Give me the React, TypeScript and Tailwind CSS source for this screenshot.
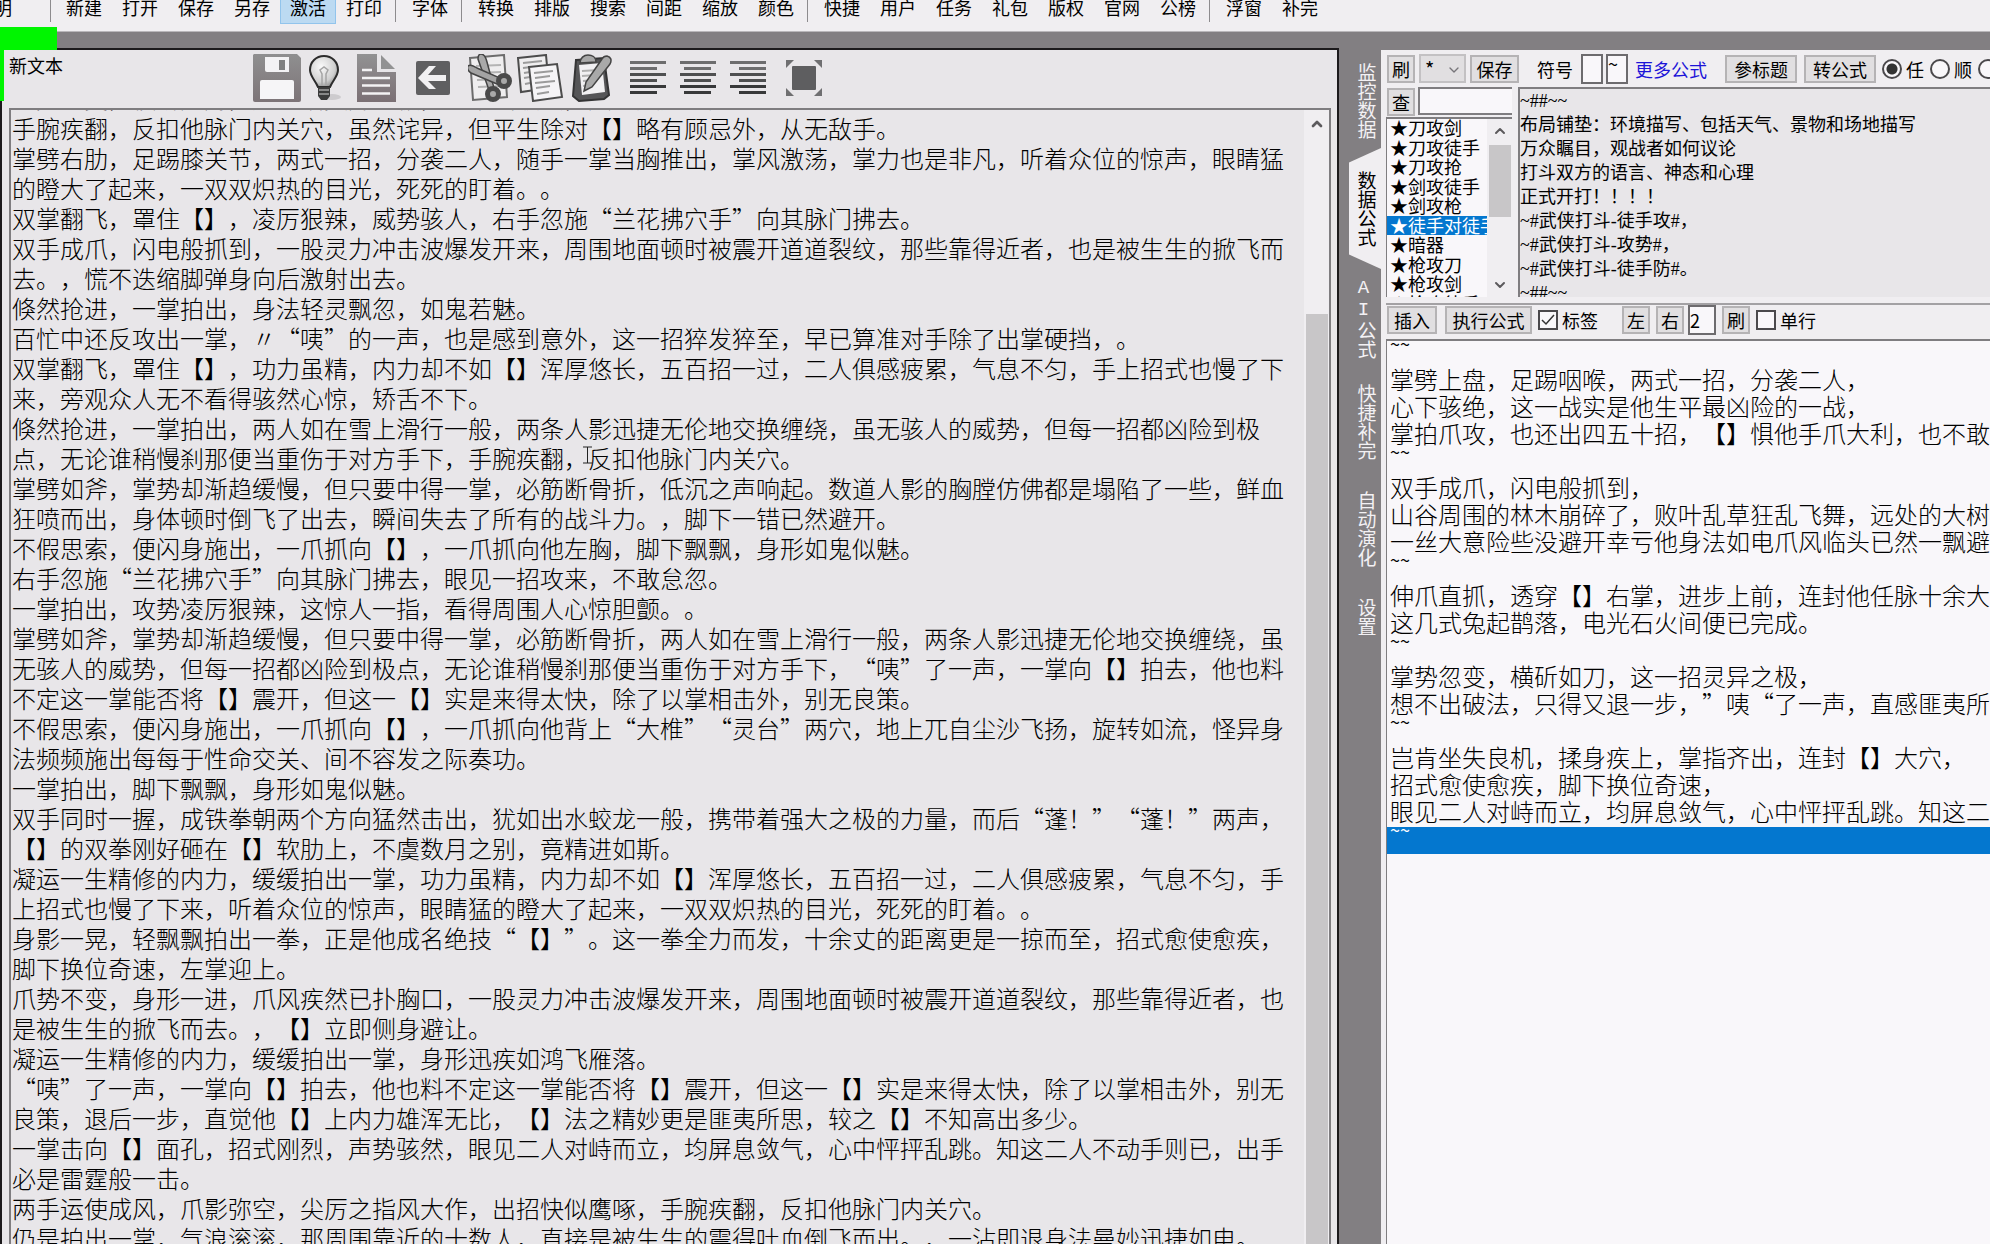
import { useEffect, useRef } from 'react';
import { ChevronDown, ChevronUp } from 'lucide-react';
import clsx from 'clsx';

const MENU_GROUPS = [
  ['新建', '打开', '保存', '另存', '激活', '打印'],
  ['字体'],
  ['转换', '排版', '搜索', '间距', '缩放', '颜色'],
  ['快捷', '用户', '任务', '礼包', '版权', '官网', '公榜'],
  ['浮窗', '补完'],
];

const SIDE_TABS = ['监控数据', '数据公式', 'AI公式', '快捷补完', '自动演化', '设置'];

const FORMULAS = [
  '★刀攻剑',
  '★刀攻徒手',
  '★刀攻抢',
  '★剑攻徒手',
  '★剑攻枪',
  '★徒手对徒手',
  '★暗器',
  '★枪攻刀',
  '★枪攻剑',
  '★枪攻徒手',
];

const FORMULA_TEXT = `~##~~
布局铺垫：环境描写、包括天气、景物和场地描写
万众瞩目，观战者如何议论
打斗双方的语言、神态和心理
正式开打！！！！
~#武侠打斗-徒手攻#，
~#武侠打斗-攻势#，
~#武侠打斗-徒手防#。
~##~~`;

const RESULTS = [
  '~~',
  '掌劈上盘，足踢咽喉，两式一招，分袭二人，',
  '心下骇绝，这一战实是他生平最凶险的一战，',
  '掌拍爪攻，也还出四五十招，【】惧他手爪大利，也不敢',
  '~~',
  '双手成爪，闪电般抓到，',
  '山谷周围的林木崩碎了，败叶乱草狂乱飞舞，远处的大树',
  '一丝大意险些没避开幸亏他身法如电爪风临头已然一飘避',
  '~~',
  '伸爪直抓，透穿【】右掌，进步上前，连封他任脉十余大',
  '这几式兔起鹊落，电光石火间便已完成。',
  '~~',
  '掌势忽变，横斫如刀，这一招灵异之极，',
  '想不出破法，只得又退一步，”咦“了一声，直感匪夷所',
  '~~',
  '岂肯坐失良机，揉身疾上，掌指齐出，连封【】大穴，',
  '招式愈使愈疾，脚下换位奇速，',
  '眼见二人对峙而立，均屏息敛气，心中怦抨乱跳。知这二',
];

const ARTICLE = `掌势忽变，横斫如刀，这一招灵异之极，想不出破法，只得又退一步。
手腕疾翻，反扣他脉门内关穴，虽然诧异，但平生除对【】略有顾忌外，从无敌手。
掌劈右肋，足踢膝关节，两式一招，分袭二人，随手一掌当胸推出，掌风激荡，掌力也是非凡，听着众位的惊声，眼睛猛
的瞪大了起来，一双双炽热的目光，死死的盯着。。
双掌翻飞，罩住【】，凌厉狠辣，威势骇人，右手忽施“兰花拂穴手”向其脉门拂去。
双手成爪，闪电般抓到，一股灵力冲击波爆发开来，周围地面顿时被震开道道裂纹，那些靠得近者，也是被生生的掀飞而
去。，慌不迭缩脚弹身向后激射出去。
倏然抢进，一掌拍出，身法轻灵飘忽，如鬼若魅。
百忙中还反攻出一掌，〃“咦”的一声，也是感到意外，这一招猝发猝至，早已算准对手除了出掌硬挡，。
双掌翻飞，罩住【】，功力虽精，内力却不如【】浑厚悠长，五百招一过，二人俱感疲累，气息不匀，手上招式也慢了下
来，旁观众人无不看得骇然心惊，矫舌不下。
倏然抢进，一掌拍出，两人如在雪上滑行一般，两条人影迅捷无伦地交换缠绕，虽无骇人的威势，但每一招都凶险到极
点，无论谁稍慢刹那便当重伤于对方手下，手腕疾翻，反扣他脉门内关穴。
掌劈如斧，掌势却渐趋缓慢，但只要中得一掌，必筋断骨折，低沉之声响起。数道人影的胸膛仿佛都是塌陷了一些，鲜血
狂喷而出，身体顿时倒飞了出去，瞬间失去了所有的战斗力。，脚下一错已然避开。
不假思索，便闪身施出，一爪抓向【】，一爪抓向他左胸，脚下飘飘，身形如鬼似魅。
右手忽施“兰花拂穴手”向其脉门拂去，眼见一招攻来，不敢怠忽。
一掌拍出，攻势凌厉狠辣，这惊人一指，看得周围人心惊胆颤。。
掌劈如斧，掌势却渐趋缓慢，但只要中得一掌，必筋断骨折，两人如在雪上滑行一般，两条人影迅捷无伦地交换缠绕，虽
无骇人的威势，但每一招都凶险到极点，无论谁稍慢刹那便当重伤于对方手下，“咦”了一声，一掌向【】拍去，他也料
不定这一掌能否将【】震开，但这一【】实是来得太快，除了以掌相击外，别无良策。
不假思索，便闪身施出，一爪抓向【】，一爪抓向他背上“大椎”“灵台”两穴，地上兀自尘沙飞扬，旋转如流，怪异身
法频频施出每每于性命交关、间不容发之际奏功。
一掌拍出，脚下飘飘，身形如鬼似魅。
双手同时一握，成铁拳朝两个方向猛然击出，犹如出水蛟龙一般，携带着强大之极的力量，而后“蓬！”“蓬！”两声，
【】的双拳刚好砸在【】软肋上，不虞数月之别，竟精进如斯。
凝运一生精修的内力，缓缓拍出一掌，功力虽精，内力却不如【】浑厚悠长，五百招一过，二人俱感疲累，气息不匀，手
上招式也慢了下来，听着众位的惊声，眼睛猛的瞪大了起来，一双双炽热的目光，死死的盯着。。
身影一晃，轻飘飘拍出一拳，正是他成名绝技“【】”。这一拳全力而发，十余丈的距离更是一掠而至，招式愈使愈疾，
脚下换位奇速，左掌迎上。
爪势不变，身形一进，爪风疾然已扑胸口，一股灵力冲击波爆发开来，周围地面顿时被震开道道裂纹，那些靠得近者，也
是被生生的掀飞而去。，【】立即侧身避让。
凝运一生精修的内力，缓缓拍出一掌，身形迅疾如鸿飞雁落。
“咦”了一声，一掌向【】拍去，他也料不定这一掌能否将【】震开，但这一【】实是来得太快，除了以掌相击外，别无
良策，退后一步，直觉他【】上内力雄浑无比，【】法之精妙更是匪夷所思，较之【】不知高出多少。
一掌击向【】面孔，招式刚烈，声势骇然，眼见二人对峙而立，均屏息敛气，心中怦抨乱跳。知这二人不动手则已，出手
必是雷霆般一击。
两手运使成风，爪影弥空，尖厉之指风大作，出招快似鹰啄，手腕疾翻，反扣他脉门内关穴。
仍是拍出一掌，气浪滚滚，那周围靠近的十数人，直接是被生生的震得吐血倒飞而出。，一沾即退身法曼妙迅捷如电。


`;

const BTN =
  'flex shrink-0 items-center justify-center border-2 border-[#b5b3b5] bg-[#e1dfe1] whitespace-nowrap';

function SaveIcon() {
  return (
    <svg width="48" height="48" viewBox="0 0 48 48">
      <defs>
        <linearGradient id="save" x1="0" y1="0" x2="0" y2="1">
          <stop offset="0" stopColor="#8f8f90" />
          <stop offset="1" stopColor="#7d7478" />
        </linearGradient>
      </defs>
      <path d="M1 0H44L48 4V46a2 2 0 0 1-2 2H2a2 2 0 0 1-2-2V1Z" fill="url(#save)" />
      <path d="M12 3H36V18H14a2 2 0 0 1-2-2Z" fill="#f3f2f4" />
      <rect x="26" y="6" width="6" height="10" fill="#808081" />
      <path d="M9 26H39a2 2 0 0 1 2 2V45H7V28a2 2 0 0 1 2-2Z" fill="#f6f5f7" />
    </svg>
  );
}

function BulbIcon() {
  return (
    <svg width="32" height="48" viewBox="0 0 32 48">
      <defs>
        <radialGradient id="bulb" cx="0.4" cy="0.35" r="0.7">
          <stop offset="0" stopColor="#fafafa" />
          <stop offset="0.7" stopColor="#cfcfcf" />
          <stop offset="1" stopColor="#8a8a8a" />
        </radialGradient>
      </defs>
      <ellipse cx="23" cy="43" rx="9" ry="3" fill="#cdcbce" />
      <path
        d="M15 2C7 2 1 8 1 16c0 6 5 10 8 17h12c3-7 8-11 8-17C29 8 23 2 15 2Z"
        fill="url(#bulb)"
        stroke="#2c2c2c"
        strokeWidth="2"
      />
      <path d="M13 32V20l-2-4 4-3 4 3-2 4v12" fill="none" stroke="#a5a5a5" strokeWidth="1.5" />
      <path d="M9 33h12v9l-3 4h-6l-3-4Z" fill="#3b3b3b" />
      <path d="M10 36h10M10 40h10" stroke="#a3a3a3" strokeWidth="1.5" />
    </svg>
  );
}

function DocIcon() {
  return (
    <svg width="39" height="48" viewBox="0 0 39 48">
      <defs>
        <linearGradient id="doc" x1="0" y1="0" x2="0" y2="1">
          <stop offset="0" stopColor="#929293" />
          <stop offset="1" stopColor="#7b7075" />
        </linearGradient>
      </defs>
      <path d="M0 0H20V18H39V48H0Z" fill="url(#doc)" />
      <path d="M24 1 38 15H24Z" fill="#929293" />
      <path d="M5 16h10M5 24h28M5 31.500h28M5 39.500h28" stroke="#f3f2f4" strokeWidth="2.500" />
    </svg>
  );
}

function BackIcon() {
  return (
    <svg width="34" height="34" viewBox="0 0 34 34">
      <rect width="34" height="34" rx="2" fill="#5f5f61" />
      <path d="M2 17 13 5h7l-8 9h18v6H12l8 8h-7Z" fill="#f1f0f2" />
    </svg>
  );
}

function CutIcon() {
  return (
    <svg width="45" height="48" viewBox="0 0 45 48">
      <path d="M2 4 36 1l3 42-34 3Z" fill="#efeeef" stroke="#6c6c6c" strokeWidth="2" />
      <path d="M8 12l25-1M9 19l24-1M9 26l25-1M10 33l24-1" stroke="#b4b4b4" strokeWidth="2" />
      <path d="M13 0c3 0 5 4 6 8l7 26-5 2L10 5c0-3 1-5 3-5Z" fill="#a9a9a9" stroke="#444" strokeWidth="1.500" />
      <path d="M0 12c2-2 6 0 9 2l23 10-3 6L3 19c-3-2-4-5-3-7Z" fill="#a3a3a3" stroke="#444" strokeWidth="1.500" />
      <circle cx="36" cy="27" r="5.500" fill="#a9a9a9" stroke="#4a4a4a" strokeWidth="5" />
      <circle cx="25" cy="40" r="5.500" fill="#a9a9a9" stroke="#4a4a4a" strokeWidth="5" />
    </svg>
  );
}

function CopyIcon() {
  return (
    <svg width="47" height="48" viewBox="0 0 47 48">
      <path d="M1 4 29 1l3 33-28 4Z" fill="#efeeef" stroke="#4c4c4c" strokeWidth="2" />
      <path d="M6 9l19-2M6 14l8-1M7 19l6-1M7 24l6-1M8 30l5-1" stroke="#9b9b9b" strokeWidth="2" />
      <path d="M12 13 40 10l5 33-29 4Z" fill="#f5f4f6" stroke="#4c4c4c" strokeWidth="2" />
      <path d="M17 19l19-2M18 24l15-2M18 29l20-2M19 34l14-2M20 40l12-2" stroke="#9b9b9b" strokeWidth="2" />
    </svg>
  );
}

function PasteIcon() {
  return (
    <svg width="42" height="48" viewBox="0 0 42 48">
      <path d="M6 6 34 4l5 37-5 4-25 2-6-5Z" fill="#555557" stroke="#343435" strokeWidth="2" />
      <path d="M9 11 32 9l3 29-23 3Z" fill="#f1f0f2" />
      <path d="M12 17l16-1M12 22l14-1M13 27l10-1M13 32l8-1" stroke="#b0b0b0" strokeWidth="2" />
      <path d="M10 9c0-5 4-8 8-8s8 2 8 7Z" fill="#a8a8a8" stroke="#444" strokeWidth="1.500" />
      <path d="M37 2c4 1 5 4 3 8L22 33l-8 4 2-9L32 5c1-2 3-3 5-3Z" fill="#a9a9a9" stroke="#444" strokeWidth="1.500" />
    </svg>
  );
}

function AlignIcon({ indent }: { indent: number }) {
  return (
    <svg width="36" height="34" viewBox="0 0 36 34">
      <g fill="#6d6d6e">
        <rect x="0" y="0" width="36" height="3" />
        <rect x={indent} y="6" width="27" height="3" />
      </g>
      <g fill="#4f5051">
        <rect x="0" y="12" width="36" height="3" />
        <rect x={indent} y="18" width="27" height="3" />
      </g>
      <g fill="#38393a">
        <rect x="0" y="24" width="36" height="3" />
        <rect x={indent} y="30" width="27" height="3" />
      </g>
    </svg>
  );
}

function FullscreenIcon() {
  return (
    <svg width="36" height="36" viewBox="0 0 36 36">
      <rect x="6" y="6" width="24" height="24" rx="1" fill="#5e5e60" />
      <path d="M0 0h8L0 8ZM36 0v8L28 0ZM0 36v-8l8 8ZM36 36h-8l8-8Z" fill="#6f6f71" />
    </svg>
  );
}

function MenuBar() {
  return (
    <nav className="flex h-8 shrink-0 items-start overflow-hidden border-b border-[#b9b7ba] bg-[#f0eef1]">
      <button className="-mt-2 -ml-[34px] h-8 w-14 shrink-0 pb-0.5">说明</button>
      <div className="mr-[5px] ml-7 h-[22px] w-px shrink-0 bg-[#8d8b8e]" />
      {MENU_GROUPS.map((group, i) => (
        <div key={i} className="flex shrink-0 items-start">
          {i > 0 && <div className="mr-1.5 ml-[3px] h-[22px] w-px bg-[#8d8b8e]" />}
          {group.map(label => (
            <button
              key={label}
              className={clsx(
                '-mt-2 h-8 w-14 pb-0.5',
                label === '激活' && 'border border-[#92c4ec] bg-[#bcdaf2]'
              )}
            >
              {label}
            </button>
          ))}
        </div>
      ))}
    </nav>
  );
}

function Editor() {
  const ref = useRef<HTMLTextAreaElement>(null);

  useEffect(() => {
    if (ref.current) ref.current.scrollTop = 27;
  }, []);

  return (
    <section className="relative mt-4 flex min-w-0 flex-1 flex-col border-x-2 border-t-2 border-[#1c1a1c] bg-[#e8e6e9] pr-1.5 pl-[7px]">
      <header className="flex h-[58px] shrink-0 items-start">
        <h1 className="w-[244px] shrink-0 pt-[3px] leading-6">新文本</h1>
        <div className="flex h-14 items-center">
          <button aria-label="保存" className="mr-2"><SaveIcon /></button>
          <button aria-label="提示" className="mr-4"><BulbIcon /></button>
          <button aria-label="文档" className="mr-5"><DocIcon /></button>
          <button aria-label="返回" className="mr-[18px]"><BackIcon /></button>
          <button aria-label="剪切" className="mr-1"><CutIcon /></button>
          <button aria-label="复制" className="mr-1.5"><CopyIcon /></button>
          <button aria-label="粘贴" className="mr-[18px]"><PasteIcon /></button>
          <button aria-label="左对齐" className="mr-3.5"><AlignIcon indent={0} /></button>
          <button aria-label="居中" className="mr-3.5"><AlignIcon indent={4} /></button>
          <button aria-label="右对齐" className="mr-5"><AlignIcon indent={9} /></button>
          <button aria-label="全屏"><FullscreenIcon /></button>
        </div>
      </header>
      <div className="flex min-h-0 flex-1 border-x-2 border-t-2 border-[#7f7d80]">
        <textarea
          ref={ref}
          aria-label="正文"
          spellCheck={false}
          defaultValue={ARTICLE}
          className="min-w-0 flex-1 resize-none overflow-hidden whitespace-pre bg-transparent pl-px text-2xl leading-[30px] font-light outline-none"
        />
        <div className="flex w-[25px] shrink-0 flex-col items-center bg-[#f0eef1]">
          <ChevronUp className="my-1 h-5 w-4 shrink-0 text-[#5c5a5d]" strokeWidth={4} />
          <div className="mt-44 w-[22px] flex-1 bg-[#c8c6c8]" />
        </div>
      </div>
      <svg className="absolute top-[396px] left-[581px]" width="9" height="18" viewBox="0 0 9 18">
        <path d="M0 1h9M4.500 1v16M0 17h9" stroke="#222" fill="none" />
      </svg>
    </section>
  );
}

function SideTabs() {
  return (
    <div className="flex w-[42px] shrink-0 flex-col pt-4 font-['Liberation_Mono','Noto_Sans_CJK_SC',monospace]">
      {SIDE_TABS.map((tab, i) => (
        <button
          key={tab}
          className={clsx(
            'flex h-[107px] shrink-0 items-center justify-center pl-[10px] text-left text-[19px] leading-none whitespace-nowrap',
            i !== 1 && 'text-[#f3f1f4]'
          )}
        >
          {i === 1 ? (
            <span className="-my-2 flex h-[121px] w-full items-center justify-center bg-[#f0eef1] pr-1 [clip-path:polygon(100%_0,0_12%,0_88%,100%_100%)]">
              <span className="[text-orientation:upright] [writing-mode:vertical-rl]">{tab}</span>
            </span>
          ) : (
            <span className="mr-1 h-[78px] [text-orientation:upright] [writing-mode:vertical-rl]">{tab}</span>
          )}
        </button>
      ))}
    </div>
  );
}

function Radio({ label, checked }: { label: string; checked?: boolean }) {
  return (
    <label className="mr-1.5 flex shrink-0 items-center gap-1">
      <input
        type="radio"
        name="order"
        defaultChecked={checked}
        className="h-5 w-5 appearance-none rounded-full border-2 border-[#4b494c] bg-[#f9f7fa] checked:bg-[radial-gradient(circle,#333_0_5px,transparent_6px)]"
      />
      {label}
    </label>
  );
}

function Check({ label, checked }: { label: string; checked?: boolean }) {
  return (
    <label className="flex shrink-0 items-center gap-1">
      <span className="relative flex">
        <input
          type="checkbox"
          defaultChecked={checked}
          className="h-5 w-5 appearance-none border-2 border-[#4b494c] bg-[#f9f7fa]"
        />
        {checked && (
          <svg className="pointer-events-none absolute inset-0" width="20" height="20" viewBox="0 0 20 20">
            <path d="M4 10l4 4 8-9" fill="none" stroke="#333" strokeWidth="1.500" />
          </svg>
        )}
      </span>
      {label}
    </label>
  );
}

function FormulaPanel() {
  return (
    <section className="mt-[18px] flex w-[609px] shrink-0 flex-col overflow-hidden bg-[#f0eef1] pl-[5px]">
      <div className="flex h-[37px] shrink-0 items-center pl-px">
        <button className={clsx(BTN, 'mr-1 h-7 w-7')}>刷</button>
        <span className="relative mr-1 flex">
          <select aria-label="筛选" className="h-[29px] w-[47px] appearance-none border-2 border-[#c3c1c3] bg-[#e1dfe1] pl-1 text-xl leading-6">
            <option>*</option>
          </select>
          <ChevronDown className="pointer-events-none absolute top-2 right-1 h-4 w-4 text-[#77757a]" />
        </span>
        <button className={clsx(BTN, 'mr-[18px] h-7 w-[49px]')}>保存</button>
        <label htmlFor="symbol" className="mr-2 shrink-0">符号</label>
        <input id="symbol" className="mr-[3px] h-[30px] w-[22px] shrink-0 border-2 border-[#6d6b6e] bg-[#f9f7fa]" />
        <input aria-label="符号二" defaultValue="~" className="mr-[7px] h-[30px] w-[22px] shrink-0 border-2 border-[#6d6b6e] bg-[#f9f7fa] pb-3" />
        <a href="#more" className="mr-[18px] shrink-0 text-[#1c14d8]">更多公式</a>
        <button className={clsx(BTN, 'mr-[7px] h-7 w-[72px]')}>參标题</button>
        <button className={clsx(BTN, 'mr-1.5 h-7 w-[72px]')}>转公式</button>
        <Radio label="任" checked />
        <Radio label="顺" />
        <Radio label="倒" />
      </div>

      <div className="flex h-[210px] shrink-0">
        <div className="mr-1.5 flex w-[126px] shrink-0 flex-col">
          <div className="flex h-[30px] shrink-0 items-start pl-px">
            <button className={clsx(BTN, 'mt-px mr-[3px] h-7 w-7')}>查</button>
            <input aria-label="查找" className="h-7 min-w-0 flex-1 border-2 border-r-0 border-[#7f7d80] bg-[#f9f7fa]" />
          </div>
          <div className="flex min-h-0 flex-1 border-t-2 border-l border-[#7f7d80] bg-[#f9f7fa]">
            <ul role="listbox" aria-label="公式" className="-mt-px flex h-[195px] min-w-0 flex-1 flex-col self-start [clip-path:inset(0_0_16px_0)]">
              {FORMULAS.map((name, i) => (
                <li
                  key={name}
                  role="option"
                  aria-selected={i === 5}
                  className="flex min-h-0 flex-1 items-center overflow-hidden pb-px pl-[3px] leading-none whitespace-nowrap aria-selected:bg-[#0477cf] aria-selected:text-white"
                >
                  {name}
                </li>
              ))}
            </ul>
            <div className="flex w-[25px] shrink-0 flex-col items-center bg-[#f0eef1]">
              <ChevronUp className="my-1 h-4 w-4 shrink-0 text-[#5c5a5d]" strokeWidth={3} />
              <div className="mt-0.5 h-[72px] w-[22px] shrink-0 bg-[#c8c6c8]" />
              <ChevronDown className="mt-auto mb-1 h-4 w-4 shrink-0 text-[#5c5a5d]" strokeWidth={3} />
            </div>
          </div>
        </div>
        <textarea
          aria-label="公式内容"
          spellCheck={false}
          defaultValue={FORMULA_TEXT}
          className="min-w-0 flex-1 resize-none overflow-hidden whitespace-pre border-t-2 border-l-2 border-[#7f7d80] bg-[#e8e6e9] font-['Liberation_Serif','Noto_Sans_CJK_SC',serif] leading-6 outline-none"
        />
      </div>

      <div className="mt-1.5 flex h-9 shrink-0 items-center border-t-2 border-[#a3a1a4] pb-1 pl-px">
        <button className={clsx(BTN, 'mr-2 h-7 w-[50px]')}>插入</button>
        <button className={clsx(BTN, 'mr-1.5 h-7 w-[87px]')}>执行公式</button>
        <Check label="标签" checked />
        <button className={clsx(BTN, 'mr-1.5 ml-6 h-7 w-7')}>左</button>
        <button className={clsx(BTN, 'mr-1 h-7 w-7')}>右</button>
        <input aria-label="数量" defaultValue="2" className="mr-1.5 h-[30px] w-7 shrink-0 border-2 border-[#6d6b6e] bg-[#f9f7fa]" />
        <button className={clsx(BTN, 'mr-1.5 h-7 w-7')}>刷</button>
        <Check label="单行" />
      </div>

      <div className="min-h-0 flex-1 overflow-hidden border-t-2 border-l border-[#7f7d80] bg-[#f9f7fa] whitespace-nowrap">
        {RESULTS.map((line, i) => (
          <p
            key={i}
            className={clsx(
              'h-[27px] pl-[3px]',
              line === '~~' ? 'text-lg leading-1' : 'text-2xl leading-[21px] font-light'
            )}
          >
            {line}
          </p>
        ))}
        <p className="h-[27px] bg-[#0477cf] pl-[3px] text-lg leading-1 text-white">~~</p>
      </div>
    </section>
  );
}

export default function App() {
  return (
    <div
      lang="zh-CN"
      className="relative flex h-screen flex-col overflow-hidden bg-[#827f82] font-['Noto_Sans_CJK_SC',sans-serif] text-lg leading-6 text-black [text-spacing-trim:space-all]"
    >
      <MenuBar />
      <main className="flex min-h-0 flex-1">
        <Editor />
        <SideTabs />
        <FormulaPanel />
      </main>
      <div className="absolute top-[27px] left-0 h-[23px] w-[57px] bg-[#00f500]" />
      <div className="absolute top-[50px] left-0 h-[51px] w-1 bg-[#00f500]" />
    </div>
  );
}
